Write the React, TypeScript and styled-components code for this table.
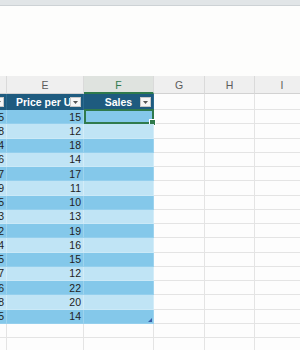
import { FC } from "react";
import styled, { createGlobalStyle } from "styled-components";

const rows: [number, number][] = [
  [5, 15],
  [8, 12],
  [4, 18],
  [6, 14],
  [7, 17],
  [9, 11],
  [5, 10],
  [3, 13],
  [2, 19],
  [4, 16],
  [5, 15],
  [7, 12],
  [6, 22],
  [8, 20],
  [5, 14],
];

const cols = "7px 77px 70px 51px 50px 55px";

const DropButton: FC = () => (
  <FilterButton>
    <svg width="5" height="3" viewBox="0 0 5 3">
      <path d="M0 0 L5 0 L2.5 3 Z" fill="#555" />
    </svg>
  </FilterButton>
);

const App: FC = () => {
  return (
    <>
      <GlobalStyle />
      <Page>
        <TopStrip />
        <Blank />
        <Sheet>
          <HeaderRow>
            <ColLetter />
            <ColLetter>E</ColLetter>
            <ColLetter $active>F</ColLetter>
            <ColLetter>G</ColLetter>
            <ColLetter>H</ColLetter>
            <ColLetter>I</ColLetter>
          </HeaderRow>

          <GridRow $height={16}>
            <TableHead>
              <DropButton />
            </TableHead>
            <TableHead>
              <HeadLabel $align="left">Price per Unit</HeadLabel>
              <DropButton />
            </TableHead>
            <TableHead>
              <HeadLabel $align="center">Sales</HeadLabel>
              <DropButton />
            </TableHead>
            <EmptyCell />
            <EmptyCell />
            <EmptyCell />
          </GridRow>

          {rows.map(([qty, price], i) => (
            <GridRow key={i} $height={14.25}>
              <BandCell $dark={i % 2 === 0}>{qty}</BandCell>
              <BandCell $dark={i % 2 === 0}>{price}</BandCell>
              <BandCell $dark={i % 2 === 0}>
                {i === 0 && (
                  <Selection>
                    <FillHandle />
                  </Selection>
                )}
                {i === rows.length - 1 && <ResizeCorner />}
              </BandCell>
              <EmptyCell />
              <EmptyCell />
              <EmptyCell />
            </GridRow>
          ))}

          {[0, 1].map((i) => (
            <GridRow key={`b${i}`} $height={14.25}>
              <EmptyCell />
              <EmptyCell />
              <EmptyCell />
              <EmptyCell />
              <EmptyCell />
              <EmptyCell />
            </GridRow>
          ))}
        </Sheet>
      </Page>
    </>
  );
};

export default App;

const GlobalStyle = createGlobalStyle`
  html, body {
    margin: 0;
    padding: 0;
    background: #ffffff;
    font-family: "Liberation Sans", Arial, sans-serif;
  }
`;

const Page = styled.div`
  width: 300px;
  height: 350px;
  overflow: hidden;
  display: flex;
  flex-direction: column;
  background: #fdfdfd;
`;

const TopStrip = styled.div`
  height: 5px;
  flex-shrink: 0;
  background: #e1e5e7;
  border-bottom: 1px solid #cdd2d5;
`;

const Blank = styled.div`
  height: 70px;
  flex-shrink: 0;
  background: #fdfdfc;
`;

const Sheet = styled.div`
  display: flex;
  flex-direction: column;
  width: 310px;
`;

const HeaderRow = styled.div`
  display: grid;
  grid-template-columns: ${cols};
  height: 18px;
  flex-shrink: 0;
`;

const ColLetter = styled.div<{ $active?: boolean }>`
  display: flex;
  align-items: center;
  justify-content: center;
  font-size: 10.5px;
  color: ${({ $active }) => ($active ? "#2d7a4f" : "#5b5b5b")};
  background: ${({ $active }) => ($active ? "#dfe3df" : "#efefef")};
  border-right: 1px solid #dadada;
  border-bottom: ${({ $active }) =>
    $active ? "2px solid #2f7a4c" : "1px solid #d2d2d2"};
  box-sizing: border-box;
  padding-top: 1px;
`;

const GridRow = styled.div<{ $height: number }>`
  display: grid;
  grid-template-columns: ${cols};
  height: ${({ $height }) => $height}px;
  flex-shrink: 0;
`;

const TableHead = styled.div`
  position: relative;
  display: flex;
  align-items: center;
  justify-content: flex-end;
  padding-right: 2px;
  background: #1e5b7f;
  overflow: hidden;
  box-sizing: border-box;
  border-right: 1px solid #2b6a8e;
`;

const HeadLabel = styled.span<{ $align: "left" | "center" }>`
  flex: 1;
  min-width: 0;
  overflow: hidden;
  white-space: nowrap;
  font-size: 10.5px;
  font-weight: bold;
  color: #ffffff;
  text-align: ${({ $align }) => $align};
  padding-left: ${({ $align }) => ($align === "left" ? "9px" : "13px")};
`;

const FilterButton = styled.div`
  flex-shrink: 0;
  width: 11px;
  height: 10px;
  box-sizing: border-box;
  background: #f6f6f6;
  border: 1px solid #c8c8c8;
  display: flex;
  align-items: center;
  justify-content: center;
`;

const BandCell = styled.div<{ $dark: boolean }>`
  position: relative;
  display: flex;
  align-items: center;
  justify-content: flex-end;
  padding-right: 2px;
  font-size: 10.5px;
  color: #222;
  background: ${({ $dark }) => ($dark ? "#84c8ea" : "#c0e4f5")};
  border-right: 1px solid ${({ $dark }) => ($dark ? "#9dd3ee" : "#d2ecf8")};
  border-bottom: 1px solid ${({ $dark }) => ($dark ? "#94cfed" : "#cbe9f7")};
  box-sizing: border-box;
`;

const EmptyCell = styled.div`
  background: #fdfdfd;
  border-right: 1px solid #e4e4e4;
  border-bottom: 1px solid #e4e4e4;
  box-sizing: border-box;
`;

const Selection = styled.div`
  position: absolute;
  left: 0;
  top: -1px;
  right: -1px;
  bottom: -1px;
  border: 2px solid #2f7a4c;
  box-sizing: border-box;
`;

const FillHandle = styled.div`
  position: absolute;
  right: -4px;
  bottom: -4px;
  width: 5px;
  height: 5px;
  background: #2f7a4c;
  border: 1px solid #ffffff;
`;

const ResizeCorner = styled.div`
  position: absolute;
  right: 1px;
  bottom: 1px;
  width: 0;
  height: 0;
  border-left: 4px solid transparent;
  border-bottom: 4px solid #3a5fa8;
`;
